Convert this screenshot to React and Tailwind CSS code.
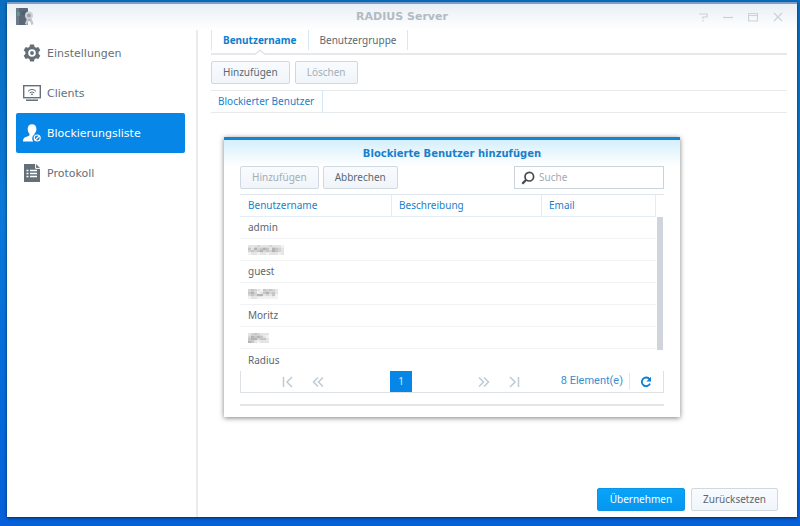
import { useState } from 'react';

const NAV_ITEMS = [
  { id: 'settings', label: 'Einstellungen', Icon: GearIcon },
  { id: 'clients', label: 'Clients', Icon: ClientIcon },
  { id: 'blocklist', label: 'Blockierungsliste', Icon: BlockedUserIcon },
  { id: 'log', label: 'Protokoll', Icon: LogIcon },
];

const TABS = ['Benutzername', 'Benutzergruppe'];

// Users without a name carry the shades of their pixelated label
const USERS = [
  { name: 'admin' },
  { mosaic: ['dddcdddcddde', 'bdacbabdabcd', 'cbcbacbcabcd', 'eddeddeddded'] },
  { name: 'guest' },
  { mosaic: ['cbcdebcbcd', 'bacedbacbd', 'cbcaadcdbe', 'eddeeeeeee'] },
  { name: 'Moritz' },
  { mosaic: ['dcbcddd', 'cababde', 'baacbbd', 'abdeddd'] },
  { name: 'Radius' },
];

const SHADES = { a: '#b4b4b6', b: '#c6c6c8', c: '#d4d4d5', d: '#e4e4e5', e: '#f2f2f2' };

function AppLogo() {
  return (
    <svg viewBox="0 0 20 20" className="h-5 w-5" aria-hidden="true">
      <rect x="1" y="1" width="12" height="17" rx="1" fill="#5b6878" />
      <rect x="1" y="1" width="3" height="17" fill="#6d7a89" />
      <path d="M2 6h3M2 8h3" stroke="#4fc08a" strokeWidth="1" />
      <path d="M7 5h4M7 7h3" stroke="#4a5665" strokeWidth="1" />
      <path d="M13 12l-2 5.500M15.500 12l2 5.500" stroke="#c4c8cd" strokeWidth="2.400" />
      <circle cx="14" cy="8.500" r="3" fill="#9ba2aa" stroke="#cfd2d7" strokeWidth="2" />
      <path d="M13 12h2.500v2h-2.500z" fill="#aeb3ba" />
    </svg>
  );
}

function GearIcon() {
  return (
    <svg viewBox="0 0 18 18" className="h-[18px] w-[18px]" fill="currentColor" aria-hidden="true">
      <path
        fillRule="evenodd"
        d="M7 .5h4l.5 2.300 1.500.9 2.300-.8 2 3.400-1.700 1.600v2.200l1.700 1.600-2 3.400-2.300-.8-1.500.9-.5 2.300H7l-.5-2.300-1.500-.9-2.300.8-2-3.400 1.700-1.600V7.900L.7 6.300l2-3.400 2.300.8 1.500-.9zM9 5.200a3.800 3.800 0 1 0 0 7.600 3.800 3.800 0 0 0 0-7.600z"
      />
      <circle cx="9" cy="9" r="1.900" />
    </svg>
  );
}

function ClientIcon() {
  return (
    <svg viewBox="0 0 18 18" className="h-[18px] w-[18px]" fill="none" stroke="currentColor" aria-hidden="true">
      <rect x=".7" y="1.700" width="16.600" height="12" strokeWidth="1.400" />
      <path d="M3 16.200h12" strokeWidth="1.500" />
      <path d="M5 7.200q4-3.600 8 0M6.700 8.900q2.300-2 4.600 0" strokeWidth="1" />
      <circle cx="9" cy="10.300" r=".9" fill="currentColor" stroke="none" />
    </svg>
  );
}

function BlockedUserIcon() {
  return (
    <svg viewBox="0 0 18 18" className="h-[18px] w-[18px]" fill="none" aria-hidden="true">
      <path
        d="M9 .3c2.900 0 4.400 1.900 4.400 4.700 0 2-.8 3.700-1.900 4.700v.9a4.500 4.500 0 0 0-1.200 6.900H0c0-3.300 1.400-4.200 4.700-5.300 1.400-.5 1.900-.9 1.900-2.300C5.400 8.800 4.700 7 4.700 5 4.700 2.200 6.200.3 9 .3z"
        fill="currentColor"
      />
      <circle cx="14.200" cy="14" r="3" stroke="currentColor" strokeWidth="1.100" />
      <path d="M12.200 16l4-4" stroke="currentColor" strokeWidth="1.100" />
    </svg>
  );
}

function LogIcon() {
  return (
    <svg viewBox="0 0 18 18" className="h-[18px] w-[18px]" aria-hidden="true">
      <path d="M1 0h12l4 4v14H1z" fill="currentColor" />
      <path d="M12.600 0v4.400H17" fill="none" stroke="white" strokeWidth="1" />
      <path
        d="M3.500 6.500h2M3.500 9.500h2M3.500 12.500h2M7 6.500h7M7 9.500h7M7 12.500h7"
        stroke="white"
        strokeWidth="1.500"
      />
    </svg>
  );
}

const WINDOW_CONTROLS = [
  { label: 'Hilfe', d: 'M1 2h8v3H5v2M5 8v1.500' },
  { label: 'Minimieren', d: 'M0 5.500h10' },
  { label: 'Maximieren', d: 'M.5 1.500h9v7.500h-9zM.5 3.500h9' },
  { label: 'Schließen', d: 'M1 1l8 8M9 1l-8 8' },
];

function TitleBar() {
  return (
    <header className="grid h-7 grid-cols-[1fr_auto_1fr] items-center border-t-2 border-[#7e9cc4] bg-linear-to-b from-[#e9eff6] to-white px-2">
      <AppLogo />
      <h1 className="pt-px font-[Verdana,'DejaVu_Sans',sans-serif] text-[11px] font-bold text-[#b3bac1]">
        RADIUS Server
      </h1>
      <div className="flex justify-end gap-[15px] pr-[6px] text-[#cdd2d7]">
        {WINDOW_CONTROLS.map(({ label, d }) => (
          <button key={label} type="button" aria-label={label}>
            <svg viewBox="0 0 10 10" className="h-[10px] w-[10px]" fill="none" stroke="currentColor" strokeWidth="1.200">
              <path d={d} />
            </svg>
          </button>
        ))}
      </div>
    </header>
  );
}

function Sidebar({ active, onSelect }) {
  return (
    <nav className="w-[191px] shrink-0 border-r-2 border-[#e9ebed] pr-[11px] pl-[9px]">
      <ul className="pt-[3px]">
        {NAV_ITEMS.map(({ id, label, Icon }) => (
          <li key={id}>
            <button
              type="button"
              onClick={() => onSelect(id)}
              className={`flex h-10 w-full items-center gap-[6px] rounded-xs pl-[7px] font-[Verdana,'DejaVu_Sans',sans-serif] text-[11px] ${
                id === active ? 'bg-[#0686e6] text-white' : 'text-[#63707a]'
              }`}
            >
              <Icon />
              <span className="pt-[2px]">{label}</span>
            </button>
          </li>
        ))}
      </ul>
    </nav>
  );
}

function Button({ children, variant = 'default', disabled = false }) {
  return (
    <button
      type="button"
      disabled={disabled}
      className={`h-[23px] rounded-xs border text-[10px] ${
        variant === 'primary'
          ? 'border-[#0b95e8] bg-linear-to-b from-[#08a4f8] to-[#0796f0] px-3 text-white'
          : 'border-[#d0d9e0] bg-linear-to-b from-[#f9fbfe] to-[#f0f5fa] px-[11px]'
      } ${variant === 'default' && (disabled ? 'text-[#a3aeb6]' : 'text-[#5a6872]')}`}
    >
      {children}
    </button>
  );
}

function Tabs({ active, onSelect }) {
  return (
    <div role="tablist" className="flex border-b-2 border-[#e6e8eb] pb-[3px]">
      {TABS.map((tab) => (
        <button
          key={tab}
          type="button"
          role="tab"
          aria-selected={tab === active}
          onClick={() => onSelect(tab)}
          className={`relative h-5 border-r border-[#d6e8f3] px-[11px] text-[10px] first:border-l ${
            tab === active ? 'font-bold text-[#0f80d0]' : 'text-[#5a6872]'
          }`}
        >
          {tab}
          {tab === active && (
            <svg viewBox="0 0 12 6" className="absolute -bottom-[5px] left-1/2 h-[6px] w-3 -translate-x-1/2" aria-hidden="true">
              <path d="M1 6l5-5 5 5z" fill="white" />
              <path d="M1 5.500l5-4.500 5 4.500" fill="none" stroke="#dde0e4" strokeWidth="1.200" />
            </svg>
          )}
        </button>
      ))}
    </div>
  );
}

function MosaicName({ rows }) {
  return (
    <svg
      width={rows[0].length * 3}
      height={rows.length * 3 - 2}
      viewBox={`0 0 ${rows[0].length * 3} ${rows.length * 3}`}
      preserveAspectRatio="none"
      role="img"
      aria-label="Verpixelter Name"
    >
      {rows.map((row, y) =>
        [...row].map((shade, x) => (
          <rect key={`${x}-${y}`} x={x * 3} y={y * 3} width="3" height="3" fill={SHADES[shade]} />
        ))
      )}
    </svg>
  );
}

function UserTable() {
  return (
    <div className="mt-[5px] flex h-[177px] overflow-hidden border-t border-[#dfe5ea]">
      <table className="h-fit flex-1 table-fixed border-separate border-spacing-0 text-left text-[10px]">
        <thead>
          <tr className="text-[#1a80cb]">
            <th className="h-[22px] w-[152px] border-r border-b border-[#e3edf3] px-[8px] font-normal">Benutzername</th>
            <th className="w-[150px] border-r border-b border-[#e3edf3] px-[7px] font-normal">Beschreibung</th>
            <th className="border-r border-b border-[#e3edf3] px-[7px] font-normal">Email</th>
          </tr>
        </thead>
        <tbody className="text-[#5a6872]">
          {USERS.map(({ name, mosaic }, index) => (
            <tr key={index} className="group">
              <td className="h-[22px] border-b border-[#f0f2f4] px-[8px] group-last:border-b-0">
                {name || <MosaicName rows={mosaic} />}
              </td>
              <td className="border-b border-[#f0f2f4] group-last:border-b-0" />
              <td className="border-b border-[#f0f2f4] group-last:border-b-0" />
            </tr>
          ))}
        </tbody>
      </table>
      <div className="w-2 pt-[22px]">
        <div className="ml-px h-[133px] w-[6px] bg-[#cfd5da]" />
      </div>
    </div>
  );
}

function PagerButton({ label, d }) {
  return (
    <button type="button" aria-label={label} disabled>
      <svg viewBox="0 0 12 12" className="h-3 w-3" fill="none" stroke="#bccbd4" strokeWidth="1.500">
        <path d={d} />
      </svg>
    </button>
  );
}

function Pagination() {
  return (
    <div className="flex h-[22px] items-stretch border-x border-b border-[#dde1e5] pr-[11px] pl-[41px] text-[10px]">
      <div className="flex items-center gap-[18px]">
        <PagerButton label="Erste Seite" d="M1.500 1v10M10 1L5 6l5 5" />
        <PagerButton label="Vorherige Seite" d="M6 1.500L1.500 6 6 10.500M11 1.500L6.500 6l4.500 4.500" />
      </div>
      <button type="button" aria-current="page" className="ml-[66px] w-[22px] bg-[#0686e6] text-[#d5ecff]">
        1
      </button>
      <div className="ml-[66px] flex items-center gap-[18px]">
        <PagerButton label="Nächste Seite" d="M1 1.500L5.500 6 1 10.500M6 1.500L10.500 6 6 10.500" />
        <PagerButton label="Letzte Seite" d="M2 1l5 5-5 5M10.500 1v10" />
      </div>
      <div className="ml-auto flex items-center">
        <span className="border-r border-[#e4e8eb] pr-[6px] font-['Roboto','Noto_Sans',sans-serif] text-[11px] text-[#3c8ecf]">
          8 Element(e)
        </span>
        <button type="button" aria-label="Aktualisieren" className="ml-[10px]">
          <svg viewBox="0 0 12 12" className="h-3 w-3" fill="none" aria-hidden="true">
            <path d="M9.600 3.300A4.300 4.300 0 1 0 10 7.700" stroke="#1182d2" strokeWidth="1.900" />
            <path d="M11 .8v4.700H6.300z" fill="#1182d2" />
          </svg>
        </button>
      </div>
    </div>
  );
}

function AddUserDialog() {
  return (
    <section
      role="dialog"
      aria-labelledby="dialog-title"
      className="absolute top-[107px] left-[26px] w-[456px] border-t-[3px] border-[#1683d3] bg-white bg-linear-to-b from-[#d3effc] to-white to-[26px] px-4 pb-[11px] shadow-[0_1px_5px_rgba(0,0,0,0.5)]"
    >
      <h2
        id="dialog-title"
        className="flex h-[26px] items-center justify-center font-[Verdana,'DejaVu_Sans',sans-serif] text-[10px] font-bold text-[#1a80cb]"
      >
        Blockierte Benutzer hinzufügen
      </h2>
      <div className="flex gap-1">
        <Button disabled>Hinzufügen</Button>
        <Button>Abbrechen</Button>
        <label className="ml-auto flex h-[23px] w-[150px] items-center gap-1 border border-[#c9d4dc] bg-white pl-[6px]">
          <svg viewBox="0 0 14 14" className="h-[14px] w-[14px] shrink-0" fill="none" stroke="#45494d" aria-hidden="true">
            <circle cx="8.300" cy="5.700" r="4.300" strokeWidth="1.700" />
            <path d="M5.200 8.800L1.300 12.700" strokeWidth="2.300" />
          </svg>
          <input
            type="search"
            aria-label="Suche"
            placeholder="Suche"
            className="w-full min-w-0 text-[10px] outline-none placeholder:text-[#a3aab0]"
          />
        </label>
      </div>
      <UserTable />
      <Pagination />
      <div className="mt-[11px] border-t-2 border-[#e3e5e8]" />
    </section>
  );
}

export default function App() {
  const [section, setSection] = useState('blocklist');
  const [tab, setTab] = useState('Benutzername');

  return (
    <div className="flex min-h-screen flex-col bg-linear-to-b from-[#0a6ec0] via-[#0a78d8] via-40% to-[#0560da] pt-[2px] pr-[3px] pb-[9px] pl-[7px] font-['Noto_Sans',sans-serif]">
      <div className="flex flex-1 flex-col bg-white shadow-[0_1px_3px_rgba(0,0,0,0.6)]">
        <TitleBar />
        <div className="flex flex-1">
          <Sidebar active={section} onSelect={setSection} />
          <main className="relative flex flex-1 flex-col pr-[10px] pl-[13px]">
            <Tabs active={tab} onSelect={setTab} />
            <div className="flex gap-[5px] py-[6px]">
              <Button>Hinzufügen</Button>
              <Button disabled>Löschen</Button>
            </div>
            <table className="w-full border-y border-[#e6eaed] text-left text-[10px]">
              <thead>
                <tr>
                  <th className="h-[22px] w-[111px] border-r border-[#d6e8f3] px-[7px] font-normal whitespace-nowrap text-[#1a80cb]">
                    Blockierter Benutzer
                  </th>
                  <td />
                </tr>
              </thead>
            </table>
            <footer className="mt-auto flex justify-end gap-[6px] pr-[9px] pb-[6px]">
              <Button variant="primary">Übernehmen</Button>
              <Button>Zurücksetzen</Button>
            </footer>
            <AddUserDialog />
          </main>
        </div>
      </div>
    </div>
  );
}
